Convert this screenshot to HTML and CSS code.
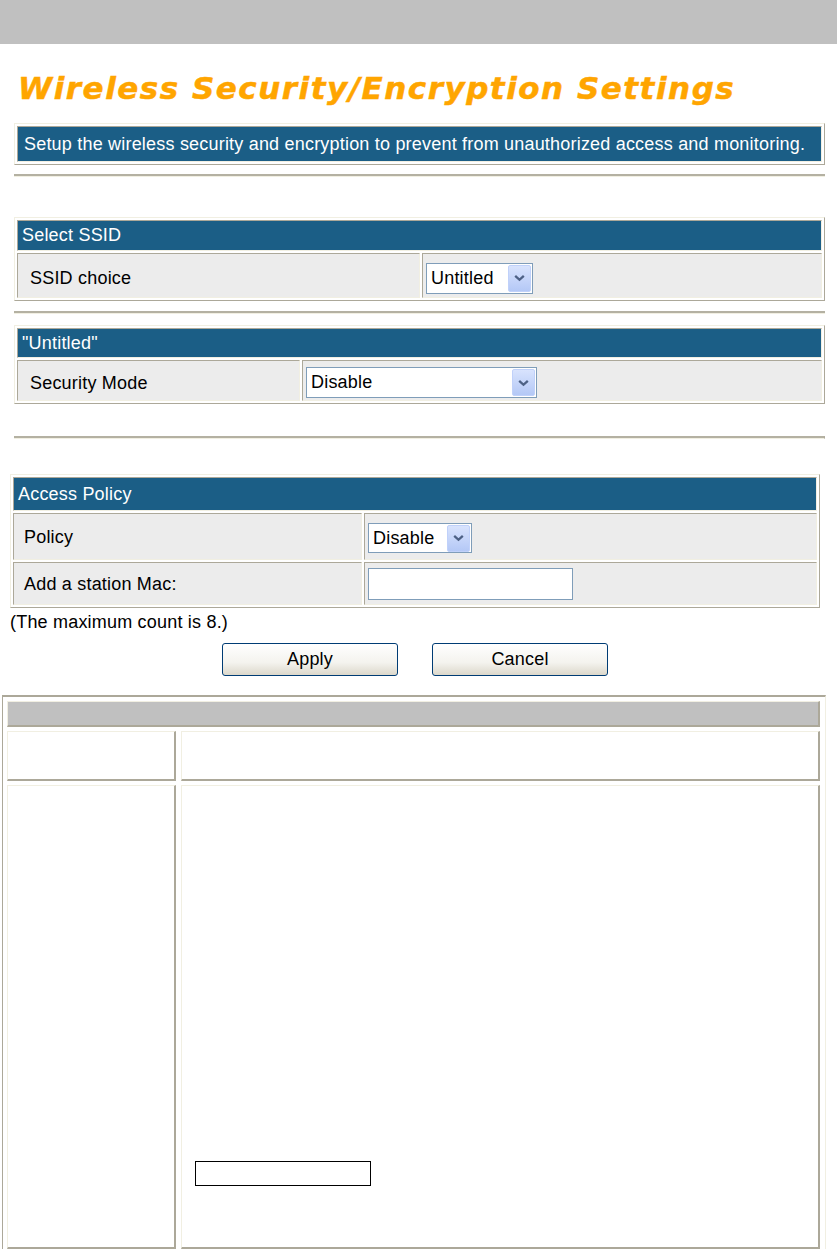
FILE: index.html
```html
<!DOCTYPE html>
<html>
<head>
<meta charset="utf-8">
<link rel="stylesheet" href="styles.css">
</head>
<body>
<div class="topbar"></div>
<main class="page">
  <h1 class="title">Wireless Security/Encryption Settings</h1>

  <div class="panel desc">
    <div class="cell head">Setup the wireless security and encryption to prevent from unauthorized access and monitoring.</div>
  </div>
  <div class="rule rule-1"></div>

  <div class="panel ssid">
    <div class="cell head">Select SSID</div>
    <div class="row">
      <div class="cell label">SSID choice</div>
      <div class="cell field">
        <div class="select sel-ssid"><span>Untitled</span><span class="arrow"><svg viewBox="0 0 11 8" width="11" height="8"><path d="M1.2 1.8 L5.5 5.8 L9.8 1.8" fill="none" stroke="#4d6185" stroke-width="2.3"/></svg></span></div>
      </div>
    </div>
  </div>
  <div class="rule rule-2"></div>

  <div class="panel untitled">
    <div class="cell head">"Untitled"</div>
    <div class="row">
      <div class="cell label">Security Mode</div>
      <div class="cell field">
        <div class="select sel-mode"><span>Disable</span><span class="arrow"><svg viewBox="0 0 11 8" width="11" height="8"><path d="M1.2 1.8 L5.5 5.8 L9.8 1.8" fill="none" stroke="#4d6185" stroke-width="2.3"/></svg></span></div>
      </div>
    </div>
  </div>
  <div class="rule rule-3"></div>

  <div class="panel access">
    <div class="cell head">Access Policy</div>
    <div class="row row-policy">
      <div class="cell label">Policy</div>
      <div class="cell field">
        <div class="select sel-policy"><span>Disable</span><span class="arrow"><svg viewBox="0 0 11 8" width="11" height="8"><path d="M1.2 1.8 L5.5 5.8 L9.8 1.8" fill="none" stroke="#4d6185" stroke-width="2.3"/></svg></span></div>
      </div>
    </div>
    <div class="row row-mac">
      <div class="cell label">Add a station Mac:</div>
      <div class="cell field">
        <div class="textbox"></div>
      </div>
    </div>
  </div>
  <p class="note">(The maximum count is 8.)</p>
  <div class="buttons">
    <button class="btn">Apply</button>
    <button class="btn">Cancel</button>
  </div>

  <div class="doc-table">
    <div class="dcell dhead"></div>
    <div class="drow drow-2">
      <div class="dcell"></div>
      <div class="dcell"></div>
    </div>
    <div class="drow drow-3">
      <div class="dcell"></div>
      <div class="dcell dbody"><div class="blank-box"></div></div>
    </div>
  </div>
</main>
</body>
</html>
```

FILE: styles.css
```css
html, body {
  margin: 0;
  padding: 0;
  background: #fff;
}
body {
  font-family: "Liberation Sans", Arial, sans-serif;
  font-size: 18px;
  letter-spacing: 0.2px;
  color: #000;
  overflow: hidden;
}
.topbar {
  height: 44px;
  background: #c0c0c0;
}
.page {
  display: flex;
  flex-direction: column;
  align-items: flex-start;
}
.title {
  margin: 26px 0 0 18px;
  font-family: "DejaVu Sans", Verdana, sans-serif;
  font-weight: bold;
  font-style: italic;
  font-size: 31px;
  line-height: 36px;
  color: #ffa500;
  letter-spacing: 1.5px;
  -webkit-text-stroke: 0.5px #ffa500;
  white-space: nowrap;
}

/* panels */
.panel {
  box-sizing: border-box;
  border: 1px solid;
  border-color: #f1efe2 #aca899 #aca899 #f1efe2;
  padding: 2px;
  display: flex;
  flex-direction: column;
  gap: 2px;
  margin-left: 14px;
  width: 811px;
}
.cell {
  box-sizing: border-box;
  border: 1px solid;
  border-color: #aca899 #f1efe2 #f1efe2 #aca899;
  background: #ececec;
  display: flex;
  align-items: center;
  white-space: nowrap;
}
.cell.head {
  background: #1b5e86;
  color: #fff;
  padding-left: 4px;
}
.row {
  display: grid;
  gap: 2px;
}
.cell.field {
  padding-left: 3px;
}
.cell.label {
  padding-top: 2px;
}

.desc {
  margin-top: 17px;
}
.desc .head {
  height: 36px;
  padding-left: 6px;
}

.rule {
  margin-left: 14px;
  width: 811px;
  box-sizing: border-box;
  border-top: 2px solid #b4b1a2;
  border-bottom: 1px solid #f1efe2;
}
.rule-1 { margin-top: 9px; }
.rule-2 { margin-top: 10px; }
.rule-3 {
  margin-top: 32px;
  border-right: 1px solid #aca899;
  height: 2px;
}

.ssid { margin-top: 40px; }
.ssid .head { height: 31px; }
.ssid .row { grid-template-columns: 403px 1fr; height: 45px; }
.ssid .label { padding-left: 12px; padding-top: 5px; }
.ssid .field { padding-top: 5px; }

.untitled { margin-top: 11px; }
.untitled .head { height: 30px; }
.untitled .row { grid-template-columns: 283px 1fr; height: 41px; }
.untitled .label { padding-left: 12px; padding-top: 5px; }
.untitled .field { padding-top: 4px; }

.access {
  margin-top: 35px;
  margin-left: 10px;
  width: 810px;
}
.access .head { height: 34px; }
.access .row { grid-template-columns: 349px 1fr; }
.access .row-policy { height: 47px; }
.access .row-mac { height: 43px; }
.access .label { padding-left: 10px; }
.access .row-policy .field { padding-top: 3px; }

/* form controls */
.select {
  box-sizing: border-box;
  height: 31px;
  border: 1px solid #7f9db9;
  background: #fff;
  display: flex;
  align-items: center;
  justify-content: space-between;
  padding: 0 1px 0 4px;
}
.arrow {
  box-sizing: border-box;
  width: 23px;
  height: 27px;
  border: 1px solid #c0d1fa;
  border-radius: 2px;
  background: linear-gradient(#d8e3fd, #b4c8f6);
  display: flex;
  align-items: center;
  justify-content: center;
}
.sel-ssid { width: 107px; }
.sel-mode { width: 231px; }
.sel-policy { width: 104px; height: 30px; }
.textbox {
  box-sizing: border-box;
  width: 205px;
  height: 32px;
  border: 1px solid #7f9db9;
  background: #fff;
}

.note {
  margin: 4px 0 0 10px;
  line-height: 20px;
}
.buttons {
  margin: 11px 0 0 222px;
  display: flex;
  gap: 34px;
}
.btn {
  box-sizing: border-box;
  width: 176px;
  height: 33px;
  border: 1px solid #003c74;
  border-radius: 3px;
  background: linear-gradient(#ffffff 0%, #f4f3ee 60%, #dcd8cb 100%);
  font-family: "Liberation Sans", Arial, sans-serif;
  font-size: 18px;
  letter-spacing: 0.2px;
  color: #000;
  padding: 0;
}

/* lower document table */
.doc-table {
  margin: 19px 0 0 2px;
  width: 824px;
  box-sizing: border-box;
  border-top: 2px solid #aca899;
  border-left: 1px solid #aca899;
  border-right: 1px solid #f1efe2;
  padding: 4px 5px 0 4px;
  display: flex;
  flex-direction: column;
  gap: 4px;
}
.dcell {
  box-sizing: border-box;
  border-top: 1px solid #f1efe2;
  border-left: 1px solid #f1efe2;
  border-right: 2px solid #aca899;
  border-bottom: 2px solid #aca899;
  background: #fff;
}
.dhead {
  height: 26px;
  background: #c0c0c0;
}
.drow {
  display: grid;
  grid-template-columns: 169px 1fr;
  gap: 5px;
}
.drow-2 { height: 50px; }
.drow-3 { height: 464px; }
.dbody {
  padding: 375px 0 0 13px;
}
.blank-box {
  width: 176px;
  height: 25px;
  box-sizing: border-box;
  border: 1px solid #000;
}
```
